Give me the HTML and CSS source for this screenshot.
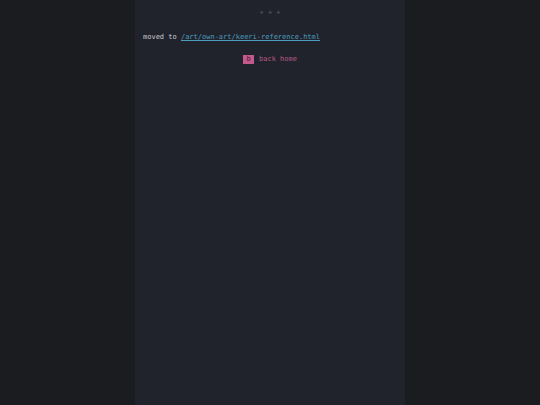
FILE: index.html
```html
<!DOCTYPE html>
<html>
<head>
<meta charset="utf-8">
<link rel="stylesheet" href="styles.css">
</head>
<body>
<main class="page">
  <div class="stars">* * *</div>
  <p class="moved">moved to <a class="link" href="#">/art/own-art/keeri-reference.html</a></p>
  <div class="back"><span class="key">b</span><span class="back-text">back home</span></div>
</main>
</body>
</html>
```
FILE: styles.css
```css
html, body {
  margin: 0;
  padding: 0;
  background: #1b1c20;
  height: 100%;
}
.page {
  box-sizing: border-box;
  width: 270px;
  min-height: 100vh;
  margin: 0 auto;
  background: #21232c;
  padding: 8px 8px;
  font-family: "DejaVu Sans Mono", monospace;
  font-size: 7px;
  line-height: 10px;
  color: #c9cbd0;
}
.stars {
  margin-top: 1px;
  text-align: center;
  color: #5d6068;
}
.moved {
  margin: 13px 0 0;
}
.link {
  color: #4a9cbf;
  text-decoration: underline;
}
.back {
  margin-top: 12px;
  display: flex;
  justify-content: center;
  align-items: center;
  gap: 5px;
}
.key {
  display: inline-block;
  width: 11px;
  height: 9px;
  line-height: 9px;
  text-align: center;
  background: #c5588c;
  color: #3a1d2c;
}
.back-text {
  color: #b45a86;
}
```
